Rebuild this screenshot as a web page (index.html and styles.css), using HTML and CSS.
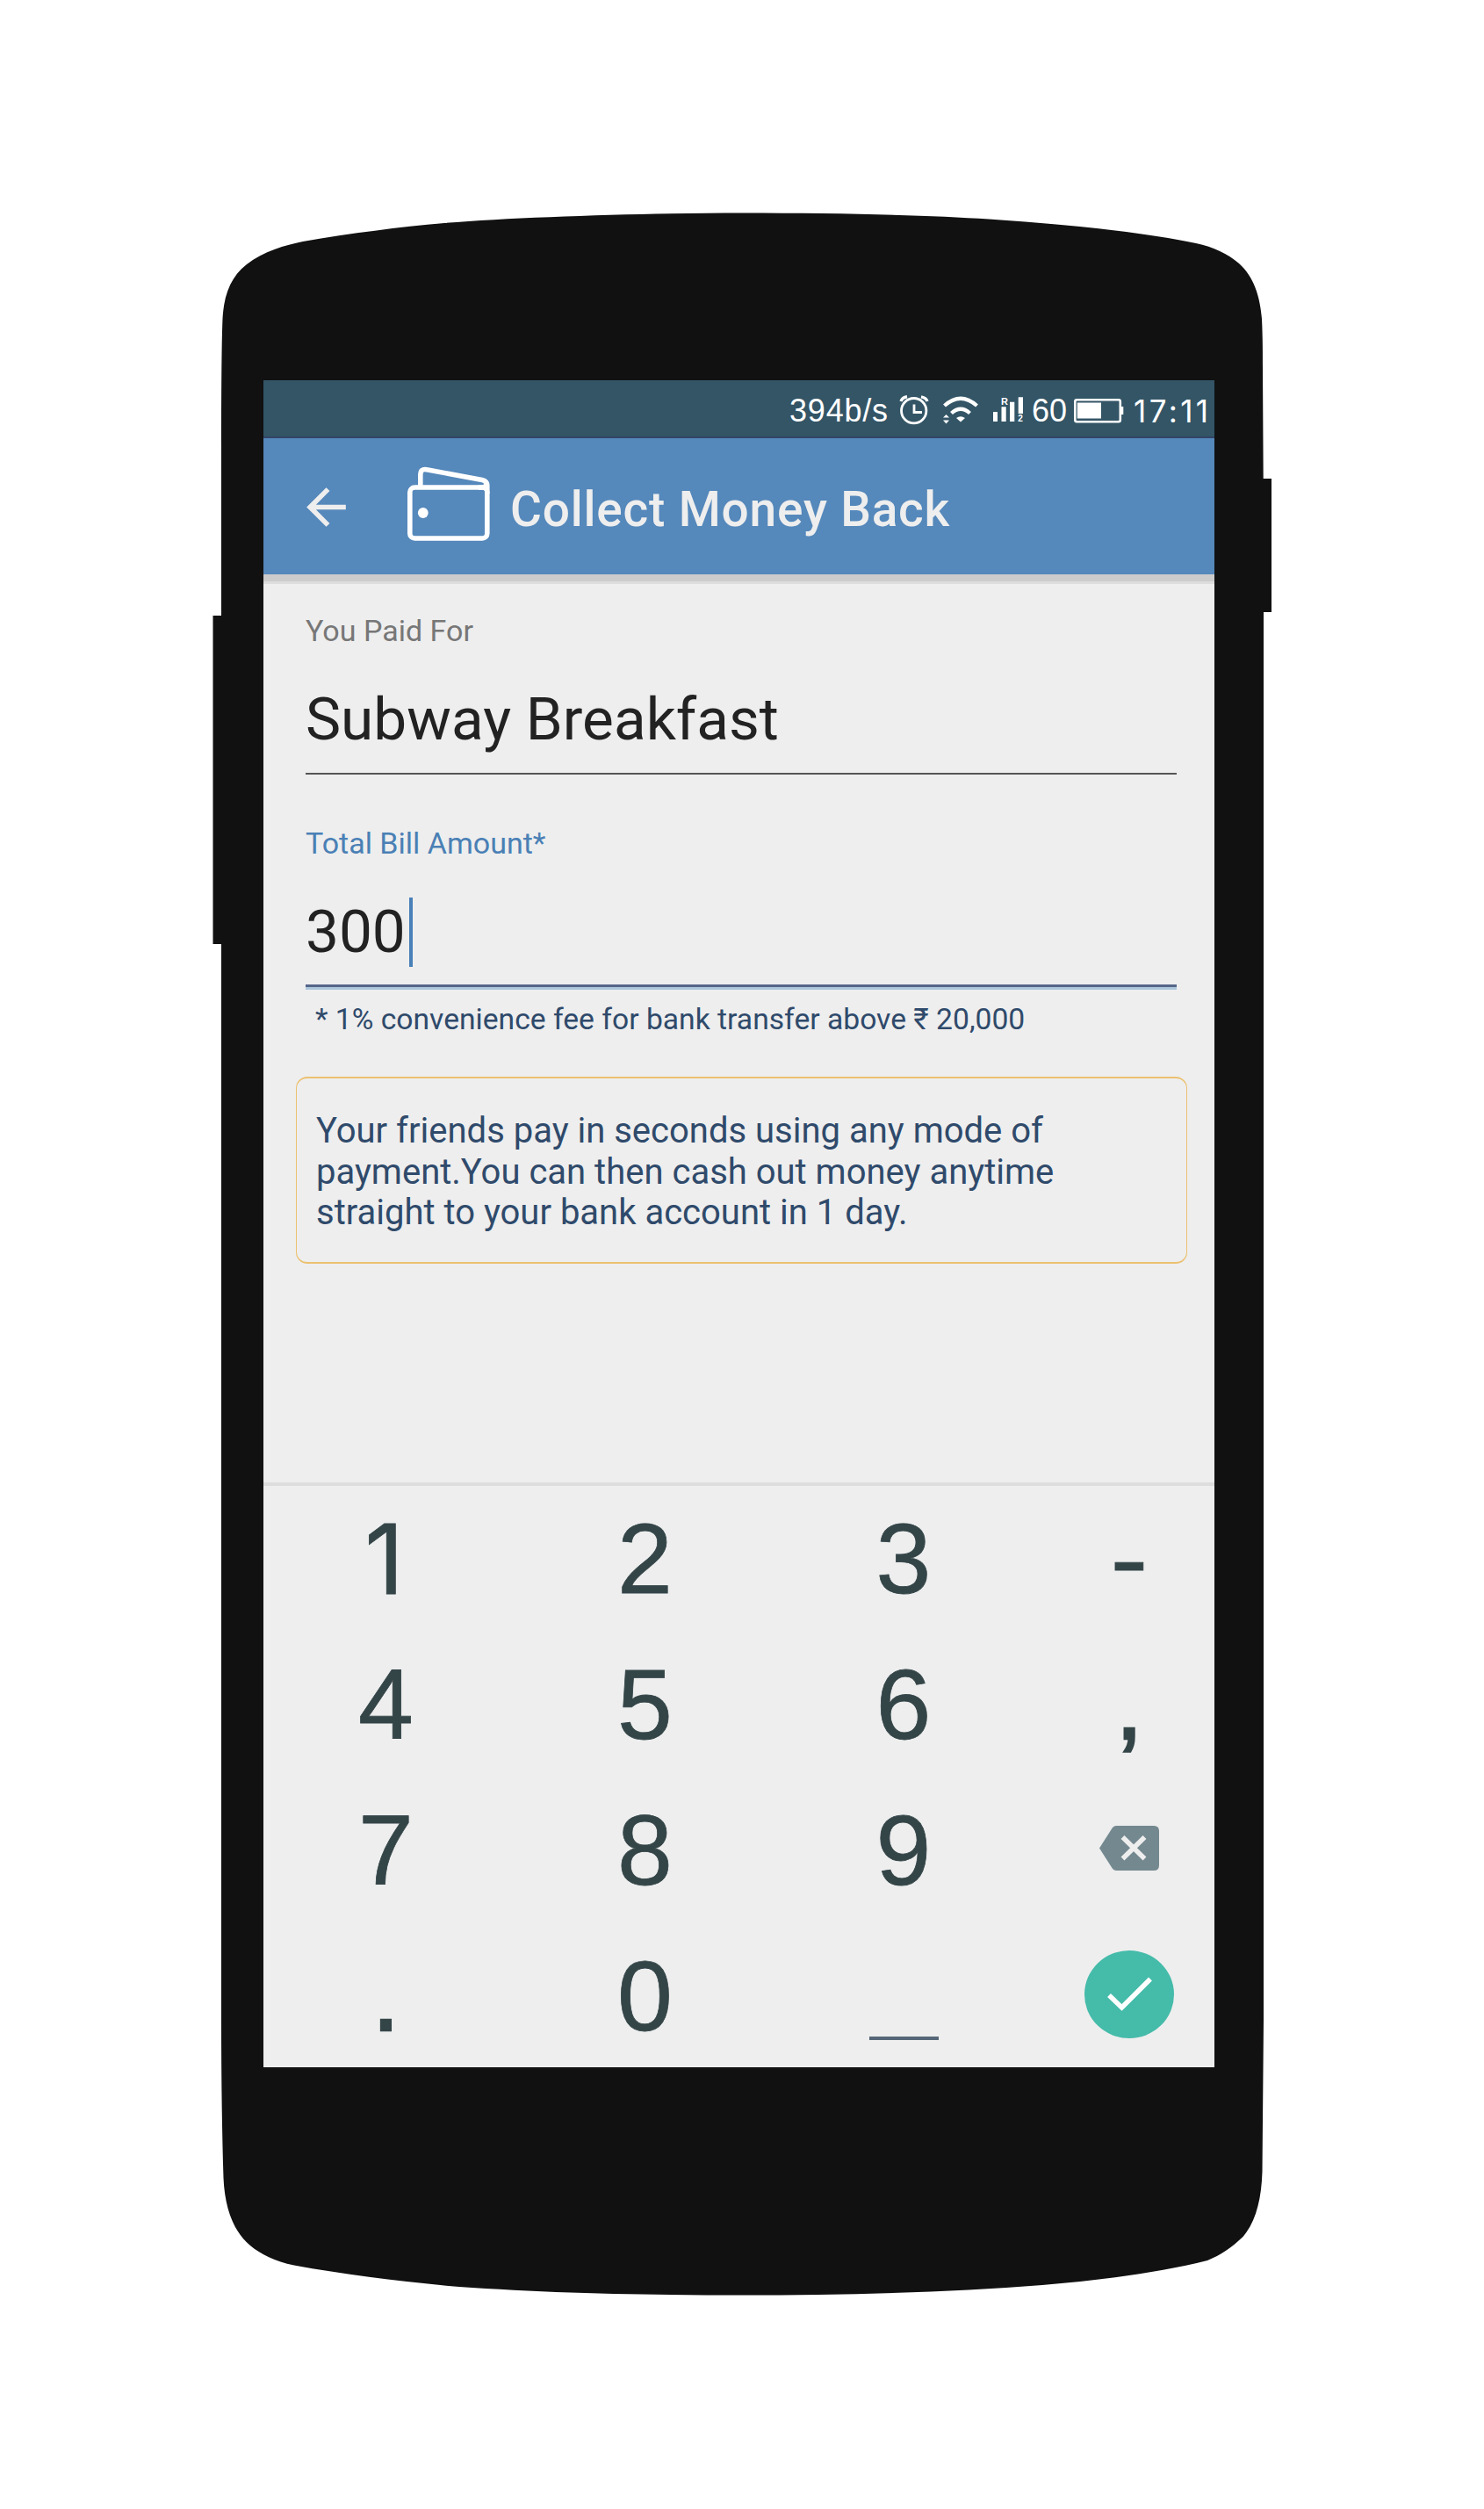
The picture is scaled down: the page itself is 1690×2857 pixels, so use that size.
FILE: index.html
```html
<!DOCTYPE html>
<html lang="en">
<head>
<meta charset="utf-8">
<title>Collect Money Back</title>
<link rel="stylesheet" href="styles.css">
</head>
<body>
<div class="phone">
  <svg class="phone-shell" viewBox="242 242 1207 2372" aria-hidden="true">
    <path d="M845 242.500C740 242.500 590 247 506 254C455 258.500 400 265.500 345 275C325 279 300 286 281 301C263 315 255 335 253.500 363C252.500 385 252 440 252 540V2300C252 2370 253 2430 254.500 2480C256 2515 266 2541 285 2557C297 2567 313 2575 335 2579.500C390 2589.500 450 2597 506 2602.500C610 2611 740 2613.500 845 2613.500C960 2613.500 1080 2610.500 1187 2602C1255 2596 1320 2588 1375 2574C1390 2568 1403 2559 1415.500 2547C1430 2530 1436.500 2505 1437.500 2473L1439 2300V600L1438 420C1438 400 1438 385 1437 363C1435 338 1428 315 1411 300C1398 289 1382 281 1362 277C1300 264 1210 255 1126 249.500C1060 245 960 242.500 845 242.500Z"/>
    <path d="M242.500 701H260V1075H242.500ZM1430 545H1448V697H1430Z"/>
  </svg>
  <main class="screen">
    <div class="status">
      <span class="status-speed">394b/s</span>
      <svg class="status-icons" width="160" height="40" viewBox="1018 448 160 40" fill="none" stroke="#fff" stroke-width="2.800">
        <circle cx="1040.700" cy="467.700" r="14.200"/>
        <path d="M1041 460.500V469.500H1050"/>
        <path d="M1026 457Q1027.500 452.500 1033 451.800M1049 451.800Q1055 453 1056 457" stroke-width="3.400"/>
        <path d="M1075.500 462Q1094 445.500 1112.500 462M1083.500 470.500Q1094 461 1104.500 470.500" stroke-width="4.300"/>
        <path d="M1089 476Q1094 472.500 1099 476L1094 480.500ZM1074 475.500L1077.500 472L1081 475.500ZM1074 478.500L1077.500 482.500L1081 478.500Z" fill="#fff" stroke="none"/>
        <path d="M1131 469H1136V480H1131ZM1140.500 463.300H1145.700V480H1140.500ZM1150 457.700H1155.300V480H1150ZM1159.700 452.300H1165V471H1159.700Z" fill="#fff" stroke="none"/>
        <text class="sim-tag" x="1140" y="460.500" font-size="11">R</text>
        <text class="sim-tag" x="1159.200" y="480.300" font-size="10">2</text>
      </svg>
      <span class="status-level">60</span>
      <svg class="battery" width="57" height="28" viewBox="0 0 57 28" fill="none" stroke="#fff" stroke-width="2.600">
        <rect x="1.300" y="1.300" width="51.500" height="25" rx="2"/>
        <path d="M3.800 4.500H31V22.500H3.800ZM53 9H56.300V18H53Z" fill="#fff" stroke="none"/>
      </svg>
      <span class="status-time">17:11</span>
    </div>
    <header class="appbar">
      <svg class="back" width="67" height="67" viewBox="0 0 24 24" fill="#eee"><path d="M20 11H7.830l5.590-5.590L12 4l-8 8 8 8 1.410-1.410L7.830 13H20v-2z"/></svg>
      <svg class="wallet" width="94" height="86" viewBox="464 531 94 86" fill="none" stroke="#fff" stroke-width="5.600" stroke-linejoin="round">
        <rect x="466.800" y="555" width="88" height="58" rx="5.500"/>
        <path d="M478.800 555V541Q479 533 486 534.800L549 546.500Q555 548 554.800 553.500V562"/>
        <path d="M545 555H550Q555 554 553.500 549"/>
        <circle cx="481.800" cy="584" r="5.900" fill="#fff" stroke="none"/>
      </svg>
      <h1 class="title">Collect Money Back</h1>
    </header>
    <section class="form">
      <label class="label">You Paid For</label>
      <div class="value">Subway Breakfast</div>
      <label class="label label-active">Total Bill Amount*</label>
      <div class="value value-active">300<span class="caret"></span></div>
      <p class="note">* 1% convenience fee for bank transfer above ₹ 20,000</p>
      <p class="info">Your friends pay in seconds using any mode of<br>payment.You can then cash out money anytime<br>straight to your bank account in 1 day.</p>
    </section>
    <section class="keypad">
      <span class="key key-one">1</span><span class="key">2</span><span class="key">3</span><span class="key key-dash">-</span>
      <span class="key">4</span><span class="key">5</span><span class="key">6</span><span class="key key-mark">,</span>
      <span class="key">7</span><span class="key">8</span><span class="key">9</span>
      <span class="key"><svg class="backspace" width="68" height="51" viewBox="0 0 68 51"><path d="M19 0H62Q68 0 68 6V45Q68 51 62 51H19Q17 51 15 49L0 25.500L15 2Q17 0 19 0Z" fill="#74888f"/><path d="M26.500 13L51.500 37.500M51.500 13L26.500 37.500" stroke="#eee" stroke-width="5.500"/></svg></span>
      <span class="key key-mark">.</span><span class="key">0</span><span class="key"><i class="space"></i></span>
      <span class="key"><svg class="done" width="102" height="100" viewBox="0 0 102 100"><ellipse cx="51" cy="50" rx="51" ry="50" fill="#45bbaa"/><path d="M28 51L42.500 65L75 32.500" fill="none" stroke="#fff" stroke-width="5.500"/></svg></span>
    </section>
  </main>
</div>
</body>
</html>
```
FILE: styles.css
```css
body {
  margin: 0;
  background: #fff;
  font-family: Roboto, sans-serif;
}

.phone {
  position: relative;
  box-sizing: border-box;
  width: 1207px;
  height: 2372px;
  margin: 242px 0 243px 242px;
  padding: 191px 66px 0 58px;
  display: flow-root;
}

.phone-shell {
  position: absolute;
  inset: 0;
  width: 1207px;
  height: 2372px;
  fill: #111;
}

.screen {
  position: relative;
  display: flex;
  flex-direction: column;
  width: 1083px;
  height: 1921px;
  overflow: hidden;
  background: #eee;
}

.status {
  box-sizing: border-box;
  display: flex;
  flex: none;
  align-items: center;
  justify-content: flex-end;
  height: 66px;
  padding: 5px 6px 0 0;
  border-bottom: 2px solid #346;
  background: #356;
  color: #fff;
  font: 36px/40px "Liberation Sans", sans-serif;
}

.status-speed {
  width: 119px;
  letter-spacing: 0.8px;
}

.status-icons {
  flex: none;
}

.sim-tag {
  fill: #fff;
  stroke: none;
  font-family: "Liberation Sans", sans-serif;
  font-weight: 700;
}

.status-level {
  width: 45px;
  text-indent: -3px;
}

.battery {
  flex: none;
  margin-right: 11px;
}

.status-time {
  width: 86px;
  font-family: Inter, sans-serif;
  font-size: 35px;
  letter-spacing: 3.4px;
  white-space: nowrap;
}

.appbar {
  position: relative;
  display: flex;
  flex: none;
  height: 155px;
  background: #58b;
  box-shadow: 0 8px 0 #ccc, 0 11px 0 #ddd;
}

.back {
  flex: none;
  margin: 45px 59px 0 38px;
}

.wallet {
  flex: none;
  margin-top: 32px;
}

.title {
  margin: 49px 0 0 23px;
  color: #eee;
  font-size: 55px;
  font-weight: 500;
  line-height: 64px;
  letter-spacing: 0.8px;
  white-space: nowrap;
}

.form {
  display: flex;
  flex: none;
  flex-direction: column;
  height: 1034px;
  padding: 44px 43px 0 48px;
  box-sizing: border-box;
}

.label {
  height: 40px;
  color: #777;
  font-size: 34px;
  line-height: 40px;
}

.label-active {
  margin-top: 58px;
  color: #4a80b5;
}

.value {
  display: flex;
  align-items: center;
  height: 80px;
  margin-top: 41px;
  padding-bottom: 21px;
  border-bottom: 2px solid #555;
  color: #222;
  font-size: 67.5px;
  line-height: 80px;
}

.value-active {
  padding-bottom: 20px;
  border-bottom: 3px solid #568;
  box-shadow: 0 3px 0 #adc6dc;
}

.caret {
  width: 4px;
  height: 79px;
  margin-left: 4px;
  background: #4a80b8;
}

.note {
  margin: 17px 0 0 11px;
  color: #2f4a6b;
  font-size: 33.65px;
  line-height: 40px;
  white-space: nowrap;
}

.info {
  box-sizing: border-box;
  width: 1015px;
  height: 213px;
  margin: 45px 0 0 -11px;
  padding: 37px 22px;
  border: solid #ebc170;
  border-width: 2px 1px;
  border-radius: 13px;
  color: #2f4a6b;
  font-size: 40px;
  line-height: 46.5px;
  white-space: nowrap;
}

.keypad {
  box-sizing: border-box;
  display: grid;
  flex: none;
  grid-template-columns: 295px 295px 294px 220px;
  grid-auto-rows: 166px;
  width: 1104px;
  height: 666px;
  margin-left: -8px;
  border-top: 4px solid #ddd;
  color: #344548;
  font: 113px/166px "Liberation Sans", sans-serif;
  -webkit-text-stroke: 0.8px #344548;
}

.key {
  display: flex;
  align-items: center;
  justify-content: center;
}

.key-one {
  padding-right: 4px;
  font-family: Inter, sans-serif;
  font-size: 110px;
}

.key-dash {
  transform: scaleX(1.15);
}

.key-mark {
  -webkit-text-stroke: 2.4px #344548;
}

.backspace {
  margin-top: -5px;
}

.done {
  margin-top: -4px;
}

.space {
  width: 79px;
  height: 4px;
  margin-top: 95px;
  background: #567;
}
```
